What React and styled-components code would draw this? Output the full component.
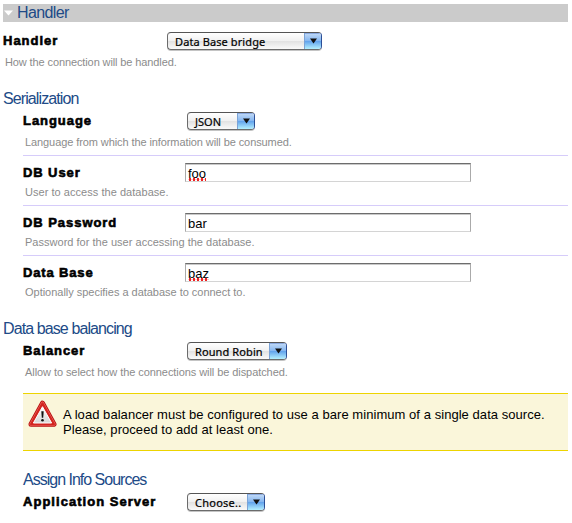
import React from "react";
import styled, { createGlobalStyle } from "styled-components";

const Global = createGlobalStyle`
  * { box-sizing: border-box; }
  body { margin: 0; background: #fff; overflow: hidden; font-family: "Liberation Sans", Arial, sans-serif; }
`;

const Page = styled.main`
  width: 572px;
  height: 523px;
  padding: 4px 4px 0 3px;
  overflow: hidden;
`;

const TitleBar = styled.header`
  display: flex;
  align-items: center;
  height: 18px;
  padding-left: 1px;
  gap: 4px;
  background: #cbcbcb;
`;

const Heading = styled.h2`
  margin: 0;
  font-size: 16px;
  font-weight: 400;
  line-height: 20px;
  height: 20px;
  letter-spacing: ${(p) => p.$track ?? -0.9}px;
  color: #204a87;
  white-space: nowrap;
`;

const Section = styled.section`
  margin-top: ${(p) => p.$gap}px;
`;

const Body = styled.div`
  padding-left: 20px;
`;

const Field = styled.div`
  padding-top: ${(p) => (p.$ruled ? 7 : 2)}px;
  height: ${(p) => (p.$ruled ? 50 : 46)}px;
  border-top: ${(p) => (p.$ruled ? "1px solid #d6ccfa" : "0")};
`;

const Line = styled.div`
  display: grid;
  grid-template-columns: ${(p) => p.$column}px 1fr;
  align-items: center;
  height: 20px;
`;

const Label = styled.label`
  font-size: 13px;
  font-weight: 700;
  line-height: 20px;
  letter-spacing: ${(p) => p.$track}px;
  color: #000;
  -webkit-text-stroke: 0.6px #000;
  white-space: nowrap;
`;

const Help = styled.p`
  margin: ${(p) => (p.$tight ? 1 : 3)}px 0 0 2px;
  font-size: 11px;
  line-height: 16px;
  letter-spacing: ${(p) => p.$track ?? 0}px;
  color: #8c8c8c;
  white-space: nowrap;
`;

const Select = styled.button`
  display: flex;
  align-items: stretch;
  justify-content: space-between;
  width: ${(p) => p.$width}px;
  height: 18px;
  padding: 0;
  border: 1px solid #6b6b6b;
  border-top-color: #555;
  border-right-color: #2c4f96;
  border-radius: 4px;
  overflow: hidden;
  background: linear-gradient(#fff 0%, #f1f1f1 48%, #e2e2e2 52%, #fafafa 100%);
  box-shadow: 0 1px 0 #c4c4c4;
  font: 400 11px/17px "Noto Sans", "Open Sans", sans-serif;
  letter-spacing: ${(p) => p.$track}px;
  color: #000;
  -webkit-text-stroke: 0.2px #000;
`;

const SelectText = styled.span`
  padding-left: 7px;
  white-space: nowrap;
`;

const ArrowCap = styled.span`
  display: flex;
  align-items: center;
  justify-content: center;
  width: 17px;
  border-left: 1px solid #7ba3d6;
  box-shadow: inset 0 1px 0 #8aaae0;
  background: linear-gradient(#c5dcf8 0%, #86b7f0 48%, #62a3ec 52%, #b4f0ff 100%);
`;

const Input = styled.div`
  align-self: start;
  width: 286px;
  height: 19px;
  padding-left: 2px;
  border: 1px solid #aaa;
  border-top-color: #6d6d6d;
  border-bottom-color: #d4d4d4;
  box-shadow: inset 0 1px 0 #c9c9c9;
  font-size: 13px;
  line-height: 19px;
  color: #000;
`;

const Word = styled.span`
  display: inline-block;
  height: 18px;
  background: ${(p) =>
    p.$flagged
      ? "radial-gradient(circle at 2px 1.5px, #ee2222 1.2px, transparent 1.6px) 0 14px / 4px 3px repeat-x"
      : "none"};
`;

const Notice = styled.aside`
  display: flex;
  gap: 6px;
  height: 58px;
  margin-top: 8px;
  padding: 6px 0 0 5px;
  border-top: 1px solid #edd400;
  border-bottom: 1px solid #edd400;
  background: #faf6da;
`;

const NoticeText = styled.p`
  margin: 7px 0 0;
  font-size: 13px;
  line-height: 15px;
  letter-spacing: ${(p) => p.$track ?? 0}px;
  white-space: nowrap;
`;

function Popup({ width, track, children }) {
  return (
    <Select type="button" $width={width} $track={track}>
      <SelectText>{children}</SelectText>
      <ArrowCap>
        <svg width="7" height="6" viewBox="0 0 7 6"><path d="M0 .5h7L3.5 5.5z" fill="#111" /></svg>
      </ArrowCap>
    </Select>
  );
}

function TextField({ label, track, help, helpTrack, value, flagged }) {
  return (
    <Field $ruled>
      <Line $column={162}>
        <Label $track={track}>{label}</Label>
        <Input><Word $flagged={flagged}>{value}</Word></Input>
      </Line>
      <Help $tight $track={helpTrack}>{help}</Help>
    </Field>
  );
}

function WarningIcon() {
  return (
    <svg width="29" height="28" viewBox="0 0 29 28">
      <defs>
        <linearGradient id="sign" x1="0" y1="0" x2="0" y2="1">
          <stop offset="0" stopColor="#fff" />
          <stop offset="1" stopColor="#d5d5d5" />
        </linearGradient>
      </defs>
      <path d="M14.5 3.2 26 24.2H3z" fill="#b80f0f" stroke="#b80f0f" strokeWidth="5" strokeLinejoin="round" />
      <path d="M14.5 3.2 26 24.2H3z" fill="none" stroke="#ef6a64" strokeWidth="3.2" strokeLinejoin="round" />
      <path d="M14.5 3.2 26 24.2H3z" fill="#d32420" stroke="#d32420" strokeWidth="2" strokeLinejoin="round" />
      <path d="M14.5 6.7 23.6 23H5.4z" fill="url(#sign)" stroke="#fff" strokeWidth="1" strokeLinejoin="round" />
      <path d="M13.3 11.2h2.4l-.5 6.5h-1.4z" fill="#111" />
      <circle cx="14.5" cy="20.2" r="1.3" fill="#111" />
    </svg>
  );
}

export default function App() {
  return (
    <>
      <Global />
      <Page>
        <TitleBar>
          <svg width="9" height="6" viewBox="0 0 9 6"><path d="M0 .5h9L4.5 5.5z" fill="#fff" /></svg>
          <Heading $track={-0.6}>Handler</Heading>
        </TitleBar>
        <Section $gap={7}>
          <Field>
            <Line $column={164}>
              <Label $track={1}>Handler</Label>
              <Popup width={155} track={0.1}>Data Base bridge</Popup>
            </Line>
            <Help $track={-0.11}>How the connection will be handled.</Help>
          </Field>
        </Section>
        <Section $gap={14}>
          <Heading>Serialization</Heading>
          <Body>
            <Field>
              <Line $column={164}>
                <Label $track={0.95}>Language</Label>
                <Popup width={68} track={0}>JSON</Popup>
              </Line>
              <Help $track={-0.09}>Language from which the information will be consumed.</Help>
            </Field>
            <TextField label="DB User" track={0.9} help="User to access the database." helpTrack={0.04} value="foo" flagged />
            <TextField label="DB Password" track={0.95} help="Password for the user accessing the database." helpTrack={0.02} value="bar" />
            <TextField label="Data Base" track={0.85} help="Optionally specifies a database to connect to." helpTrack={-0.02} value="baz" flagged />
          </Body>
        </Section>
        <Section $gap={14}>
          <Heading>Data base balancing</Heading>
          <Body>
            <Field>
              <Line $column={164}>
                <Label $track={0.9}>Balancer</Label>
                <Popup width={100} track={0.1}>Round Robin</Popup>
              </Line>
              <Help $track={-0.07}>Allow to select how the connections will be dispatched.</Help>
            </Field>
            <Notice>
              <WarningIcon />
              <NoticeText $track={0.05}>
                A load balancer must be configured to use a bare minimum of a single data source.
                <br />
                Please, proceed to add at least one.
              </NoticeText>
            </Notice>
          </Body>
        </Section>
        <Section $gap={19}>
          <Body>
            <Heading $track={-1}>Assign Info Sources</Heading>
            <Field>
              <Line $column={164}>
                <Label $track={1.03}>Application Server</Label>
                <Popup width={78} track={0.25}>Choose..</Popup>
              </Line>
            </Field>
          </Body>
        </Section>
      </Page>
    </>
  );
}
